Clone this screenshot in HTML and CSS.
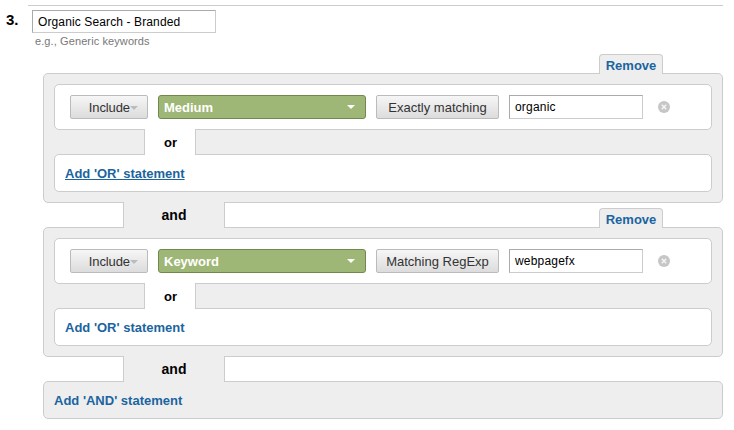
FILE: index.html
```html
<!DOCTYPE html>
<html lang="en">
<head>
  <meta charset="UTF-8">
  <link rel="stylesheet" href="styles.css">
  <title>Segment steps</title>
</head>
<body>
  <div class="step-rule"></div>
  <div class="step-head">
    <span class="step-num">3.</span>
    <div>
      <input class="name-input" type="text" value="Organic Search - Branded">
      <p class="hint">e.g., Generic keywords</p>
    </div>
  </div>

  <div class="builder">
    <div class="group">
      <a class="remove-tab" href="#">Remove</a>
      <div class="card cond-row">
        <button class="btn btn-include">Include<span class="caret"></span></button>
        <button class="field-pick">Medium<span class="caret-white"></span></button>
        <button class="btn btn-match">Exactly matching</button>
        <input class="value-input" type="text" value="organic">
        <svg class="clear-icon" viewBox="0 0 12 12" width="12" height="12">
          <circle cx="6" cy="6" r="6" fill="#c6c6c6"/>
          <path d="M3.8 3.8l4.4 4.4M8.2 3.8l-4.4 4.4" stroke="#f4f4f4" stroke-width="1.6"/>
        </svg>
      </div>
      <div class="or-link">or</div>
      <div class="card add-row"><a class="add-link add-link-hover" href="#">Add 'OR' statement</a></div>
    </div>

    <div class="and-link">and</div>

    <div class="group">
      <a class="remove-tab" href="#">Remove</a>
      <div class="card cond-row">
        <button class="btn btn-include">Include<span class="caret"></span></button>
        <button class="field-pick">Keyword<span class="caret-white"></span></button>
        <button class="btn btn-match">Matching RegExp</button>
        <input class="value-input" type="text" value="webpagefx">
        <svg class="clear-icon" viewBox="0 0 12 12" width="12" height="12">
          <circle cx="6" cy="6" r="6" fill="#c6c6c6"/>
          <path d="M3.8 3.8l4.4 4.4M8.2 3.8l-4.4 4.4" stroke="#f4f4f4" stroke-width="1.6"/>
        </svg>
      </div>
      <div class="or-link">or</div>
      <div class="card add-row"><a class="add-link" href="#">Add 'OR' statement</a></div>
    </div>

    <div class="and-link">and</div>

    <div class="add-and"><a class="add-link" href="#">Add 'AND' statement</a></div>
  </div>
</body>
</html>
```

FILE: styles.css
```css
* {
  box-sizing: border-box;
}

body {
  margin: 0;
  background: #fff;
  font-family: "Liberation Sans", Arial, sans-serif;
  color: #000;
}

.step-rule {
  margin: 5px 0 0 28px;
  width: 695px;
  border-top: 1px solid #ccc;
}

.step-head {
  display: flex;
  padding: 4px 0 0 6px;
}

.step-num {
  width: 26px;
  font-size: 15px;
  font-weight: bold;
  line-height: 20px;
}

.name-input {
  display: block;
  width: 184px;
  height: 23px;
  padding: 0 5px;
  border: 1px solid #ccc;
  border-top-color: #aaa;
  border-left-color: #aaa;
  font-family: inherit;
  font-size: 12px;
  letter-spacing: 0.12px;
  color: #000;
}

.hint {
  margin: 1px 0 0 3px;
  font-size: 11px;
  line-height: 14px;
  letter-spacing: 0.1px;
  color: #777;
}

.builder {
  display: flex;
  flex-direction: column;
  width: 680px;
  margin: 25px 0 0 43px;
}

.group {
  position: relative;
  display: flex;
  flex-direction: column;
  padding: 10px;
  background: #eee;
  border: 1px solid #ccc;
  border-radius: 5px;
}

.remove-tab {
  position: absolute;
  top: -20px;
  right: 59px;
  width: 64px;
  height: 20px;
  padding-top: 3px;
  background: #eee;
  border: 1px solid #ccc;
  border-bottom: none;
  border-radius: 4px 4px 0 0;
  font-size: 13px;
  font-weight: bold;
  line-height: 16px;
  text-align: center;
  text-decoration: none;
  color: #1a64a0;
}

.card {
  background: #fff;
  border: 1px solid #ccc;
  border-radius: 5px;
}

.cond-row {
  display: flex;
  align-items: center;
  gap: 10px;
  height: 46px;
  padding: 0 15px;
}

.add-row {
  height: 38px;
  padding-left: 10px;
  line-height: 35px;
}

.btn {
  height: 24px;
  padding: 0;
  background: linear-gradient(#f6f6f6, #dcdcdc);
  border: 1px solid #bbb;
  border-radius: 2px;
  font-family: inherit;
  font-size: 13px;
  color: #333;
}

.btn-include {
  display: flex;
  align-items: center;
  justify-content: flex-end;
  width: 78px;
  padding-right: 9px;
  letter-spacing: -0.1px;
}

.btn-match {
  width: 123px;
}

.caret {
  width: 0;
  height: 0;
  margin-top: 1px;
  border: 4px solid transparent;
  border-top: 4px solid #bbb;
  border-bottom: none;
}

.field-pick {
  display: flex;
  align-items: center;
  justify-content: space-between;
  width: 208px;
  height: 24px;
  padding: 0 10px 0 5px;
  background: #9fb776;
  border: 1px solid #6f8a4c;
  border-radius: 3px;
  font-family: inherit;
  font-size: 13px;
  font-weight: bold;
  color: #fff;
}

.caret-white {
  width: 0;
  height: 0;
  border: 4px solid transparent;
  border-top: 4px solid #fff;
  border-bottom: none;
}

.value-input {
  width: 134px;
  height: 24px;
  padding: 0 5px;
  border: 1px solid #ccc;
  border-top-color: #aaa;
  border-left-color: #aaa;
  font-family: inherit;
  font-size: 12px;
  letter-spacing: 0.2px;
  color: #000;
}

.clear-icon {
  margin-left: 5px;
}

.or-link {
  z-index: 1;
  width: 52px;
  height: 26px;
  margin: -1px 0 -1px 90px;
  padding-left: 1px;
  background: #fff;
  border-left: 1px solid #ccc;
  border-right: 1px solid #ccc;
  font-size: 13px;
  font-weight: bold;
  line-height: 27px;
  text-align: center;
}

.and-link {
  z-index: 1;
  width: 102px;
  height: 26px;
  margin: -1px 0 -1px 80px;
  background: #eee;
  border-left: 1px solid #ccc;
  border-right: 1px solid #ccc;
  font-size: 14px;
  font-weight: bold;
  line-height: 27px;
  text-align: center;
}

.add-and {
  height: 38px;
  padding-left: 10px;
  background: #eee;
  border: 1px solid #ccc;
  border-radius: 5px;
  line-height: 35px;
}

.add-link {
  font-size: 13px;
  font-weight: bold;
  text-decoration: none;
  color: #1a64a0;
}

.add-link-hover {
  text-decoration: underline;
}
```
